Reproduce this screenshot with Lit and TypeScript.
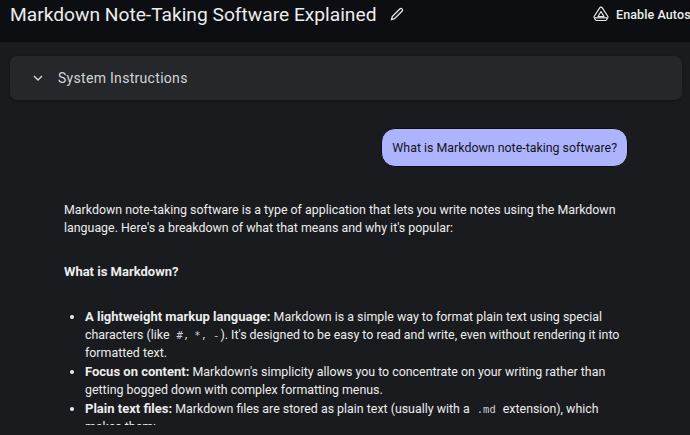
import { LitElement, html, css } from "lit";
import { customElement } from "lit/decorators.js";

@customElement("app-root")
export class AppRoot extends LitElement {
  static styles = css`
    :host { display: block; width: 690px; height: 435px; overflow: hidden; background: #1a1b1e; font-family: Roboto, "Liberation Sans", sans-serif; color: #e6e7ea; }
    .header { height: 42px; box-sizing: border-box; padding: 0 0 14px 10px; background: #0d0e11; display: flex; align-items: center; white-space: nowrap; overflow: hidden; }
    .title { width: 366px; flex: none; font-size: 19.2px; color: #eceded; }
    .pencil { margin-left: 14px; width: 14px; height: 14px; flex: none; }
    .drive { margin-left: 189px; width: 16px; height: 16px; flex: none; }
    .auto { margin-left: 7px; font-size: 12.5px; font-weight: 500; color: #eceded; letter-spacing: 0.1px; }
    .panel { margin: 14px 8px 0 10px; height: 44px; border-radius: 7px; background: #26272b; display: flex; align-items: center; padding-left: 23px; gap: 15px; box-shadow: 0 1px 3px rgba(0,0,0,.3); }
    .chev { width: 10px; height: 6px; flex: none; }
    .panel span { font-size: 14px; color: #d2d4d9; letter-spacing: 0.3px; }
    .user { display: flex; justify-content: flex-end; padding: 28px 62px 0 0; }
    .bubble { background: #adb4fd; color: #14151a; border-radius: 14px; padding: 0 10px; height: 39px; display: flex; align-items: center; font-size: 12.4px; white-space: nowrap; border: 1px solid #0c0d10; box-sizing: border-box; }
    .answer { height: 224px; margin: 34px 0 0 0; padding: 0 60px 0 64px; overflow: hidden; font-size: 12.4px; line-height: 18px; color: #eceded; }
    p { margin: 0; }
    h4 { margin: 26px 0 0; font-size: 13px; line-height: 18px; font-weight: 700; }
    ul { margin: 26px 0 0; padding: 0 0 0 21px; }
    li::marker { font-size: 14px; }
    b { font-weight: 700; font-size: 13px; }
    code { font-family: "DejaVu Sans Mono", monospace; font-size: 10.5px; color: #cfd0d4; padding: 0 4px; }
    .first { padding: 0 1px 0 4px; }
    .mid { padding: 0 1px; }
    .last { padding: 0 1px 0 2px; }
  `;

  render() {
    return html`
      <div class="header">
        <span class="title">Markdown Note-Taking Software Explained</span>
        <svg class="pencil" viewBox="0 0 14 14" fill="none" stroke="#e8e9ec" stroke-width="1.3"><path d="M1.5 12.5l.8-3L10 1.8a1.3 1.3 0 0 1 1.9 0l.3.3a1.3 1.3 0 0 1 0 1.9L4.5 11.7z"/></svg>
        <svg class="drive" viewBox="0 0 16 16" fill="none" stroke="#e8e9ec" stroke-width="1.2" stroke-linejoin="round"><path d="M8 1.2h0a1.5 1.5 0 0 1 1.3.7l5.6 8.6a1 1 0 0 1 0 1L13.400 14a1 1 0 0 1-.9.5H3.500a1 1 0 0 1-.9-.5L1.100 11.500a1 1 0 0 1 0-1L6.700 1.900A1.500 1.500 0 0 1 8 1.200z"/><path d="M8 5.500L11 10.500H5z"/><path d="M2 11.800h12"/></svg>
        <span class="auto">Enable Autosave</span>
      </div>
      <div class="panel">
        <svg class="chev" viewBox="0 0 10 6" fill="none" stroke="#d6d8dc" stroke-width="1.4"><path d="M1 1l4 4 4-4"/></svg>
        <span>System Instructions</span>
      </div>
      <div class="user"><div class="bubble">What is Markdown note-taking software?</div></div>
      <div class="answer">
        <p>Markdown note-taking software is a type of application that lets you write notes using the Markdown language. Here's a breakdown of what that means and why it's popular:</p>
        <h4>What is Markdown?</h4>
        <ul>
          <li><b>A lightweight markup language:</b> Markdown is a simple way to format plain text using special characters (like <code class="first">#,</code> <code class="mid">*,</code> <code class="last">-</code>). It's designed to be easy to read and write, even without rendering it into formatted text.</li>
          <li><b>Focus on content:</b> Markdown's simplicity allows you to concentrate on your writing rather than getting bogged down with complex formatting menus.</li>
          <li><b>Plain text files:</b> Markdown files are stored as plain text (usually with a <code>.md</code> extension), which makes them:</li>
        </ul>
      </div>
    `;
  }
}
